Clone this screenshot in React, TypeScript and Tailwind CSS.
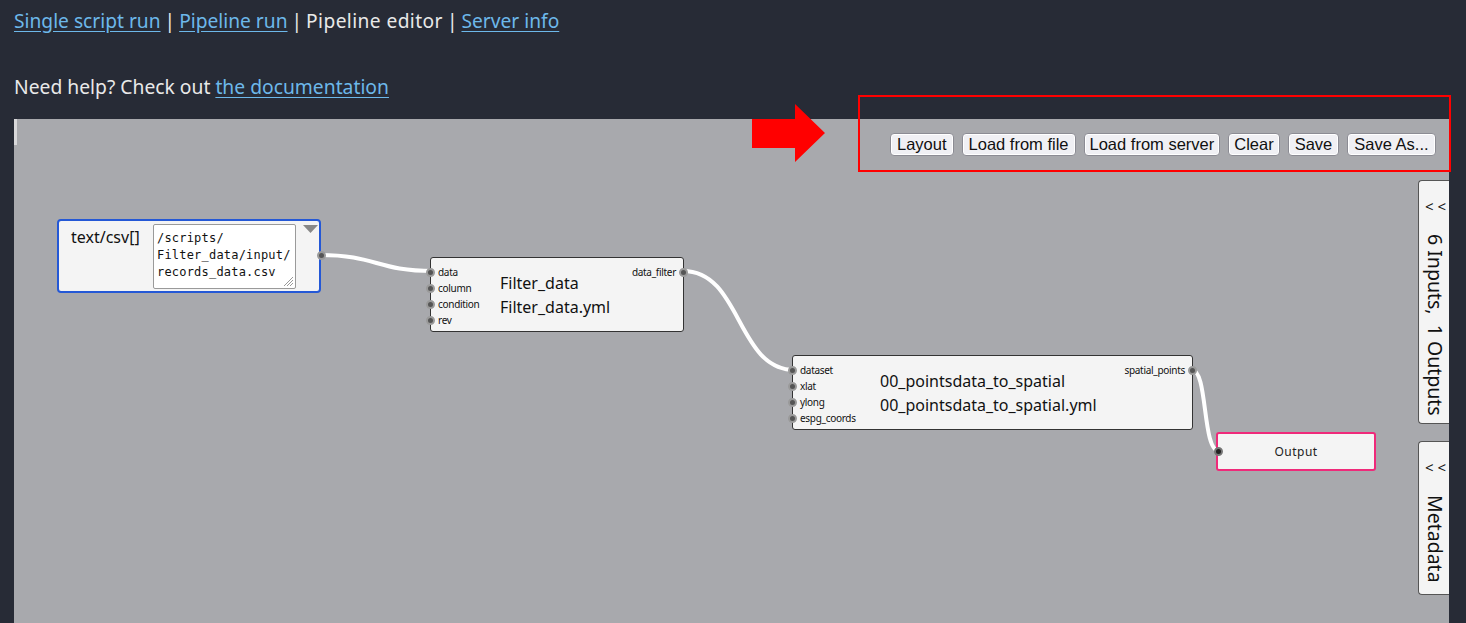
import React from "react";

const Port = ({ dark = false }: { dark?: boolean }) => (
  <span
    className={`block w-[9px] h-[9px] rounded-full border-2 ${
      dark ? "bg-[#222] border-[#777]" : "bg-[#555] border-[#9a9a9a]"
    }`}
  />
);

const ToolBtn = ({ label, px }: { label: string; px: string }) => (
  <button
    className={`h-[23px] ${px} rounded-[4px] border border-[#8c8c94] bg-[#f0f0f4] text-[16.5px] leading-none text-[#111] [font-family:'Liberation_Sans',Arial,sans-serif] shadow-[inset_0_0_0_1px_#fff]`}
  >
    {label}
  </button>
);

function ScriptNode({
  left,
  top,
  width,
  inputs,
  output,
  title,
  file,
  titleLeft,
}: {
  left: number;
  top: number;
  width: number;
  inputs: string[];
  output: string;
  title: string;
  file: string;
  titleLeft: number;
}) {
  return (
    <div
      className="absolute h-[75px] rounded-[3px] border border-[#333] bg-[#f4f4f4] flex"
      style={{ left, top, width }}
    >
      <div className="flex flex-col pt-[8px] gap-[4px] -ml-[5px]">
        {inputs.map((i) => (
          <div key={i} className="flex items-center gap-[3px] h-[12px]">
            <Port />
            <span className="text-[10px] tracking-[-0.3px] text-[#111] [font-family:'Noto_Sans',sans-serif] leading-none">
              {i}
            </span>
          </div>
        ))}
      </div>
      <div
        className="flex flex-col pt-[15px] gap-[4px] text-[16px] leading-[20px] text-[#111] [font-family:'Noto_Sans',sans-serif]"
        style={{ position: "absolute", left: titleLeft }}
      >
        <span>{title}</span>
        <span>{file}</span>
      </div>
      <div className="ml-auto flex items-start pt-[8px] -mr-[5px]">
        <div className="flex items-center gap-[3px] h-[12px]">
          <span className="text-[10px] tracking-[-0.3px] text-[#111] [font-family:'Noto_Sans',sans-serif] leading-none">
            {output}
          </span>
          <Port />
        </div>
      </div>
    </div>
  );
}

const Sep = () => <span className="mx-[4px]">|</span>;

export default function App() {
  return (
    <div className="relative w-[1466px] h-[623px] overflow-hidden bg-[#272b36] [font-family:'Noto_Sans',sans-serif]">
      <div className="pl-[14px]">
        <div className="h-[42px] flex items-center text-[19.2px] text-[#e9e9e9] whitespace-pre">
          <a className="text-[#6db8ea] underline underline-offset-[3px]">Single script run</a>
          <Sep />
          <a className="text-[#6db8ea] underline underline-offset-[3px]">Pipeline run</a>
          <Sep />
          <span className="tracking-[0.4px]">Pipeline editor</span>
          <Sep />
          <a className="text-[#6db8ea] underline underline-offset-[3px]">Server info</a>
        </div>
        <div className="h-[42px] mt-[24px] flex items-center text-[19.3px] text-[#e9e9e9] whitespace-pre">
          <span>Need help? Check out </span>
          <a className="text-[#6db8ea] underline underline-offset-[3px]">the documentation</a>
        </div>
        <div className="relative mt-[11px] w-[1435px] h-[504px] bg-[#a8a9ad] overflow-hidden">
          {/* scrollbar hint */}
          <div className="absolute left-0 top-0 w-[3px] h-[26px] bg-[#d8d8da]" />

          {/* edges */}
          <svg className="absolute inset-0" width="1435" height="504">
            <g fill="none" stroke="#ffffff" strokeWidth="4" strokeLinecap="round">
              <path d="M306 136 C 362 136, 363 152, 419 152" />
              <path d="M669 152 C 728 152, 722 251, 781 251" />
              <path d="M1178 251 C 1194 251, 1188 332, 1205 332" />
            </g>
          </svg>

          {/* toolbar */}
          <div className="absolute left-[876px] top-[14px] flex gap-[8px]">
            <ToolBtn label="Layout" px="px-[6px]" />
            <ToolBtn label="Load from file" px="px-[6px]" />
            <ToolBtn label="Load from server" px="px-[5px]" />
            <ToolBtn label="Clear" px="px-[5px]" />
            <ToolBtn label="Save" px="px-[6px]" />
            <ToolBtn label="Save As..." px="px-[6px]" />
          </div>

          {/* input node */}
          <div className="absolute left-[43px] top-[100px] w-[264px] h-[74px] rounded-[4px] border-2 border-[#2458d6] bg-[#f4f4f4]">
            <span className="absolute left-[12px] top-[6px] text-[16px] leading-[20px] text-[#111] [font-family:'Noto_Sans',sans-serif]">
              text/csv[]
            </span>
            <div className="absolute left-[94px] top-[3px] w-[143px] h-[65px] border border-[#9a9a9a] bg-white rounded-[2px] px-[3px] pt-[5px] text-[12px] leading-[17px] text-[#111] [font-family:'DejaVu_Sans_Mono',monospace] tracking-[0.2px]">
              <div>/scripts/</div>
              <div>Filter_data/input/</div>
              <div>records_data.csv</div>
              <svg className="absolute right-[1px] bottom-[1px]" width="11" height="11">
                <g stroke="#999" strokeWidth="1">
                  <line x1="10" y1="1" x2="1" y2="10" />
                  <line x1="10" y1="4" x2="4" y2="10" />
                  <line x1="10" y1="7" x2="7" y2="10" />
                </g>
              </svg>
            </div>
            <svg className="absolute left-[244px] top-[4px]" width="15" height="8">
              <polygon points="0,0 15,0 7.5,8" fill="#888" />
            </svg>
            <div className="absolute -right-[7px] top-[30px]">
              <Port />
            </div>
          </div>

          <ScriptNode
            left={416}
            top={138}
            width={254}
            inputs={["data", "column", "condition", "rev"]}
            output="data_filter"
            title="Filter_data"
            file="Filter_data.yml"
            titleLeft={69}
          />
          <ScriptNode
            left={778}
            top={236}
            width={401}
            inputs={["dataset", "xlat", "ylong", "espg_coords"]}
            output="spatial_points"
            title="00_pointsdata_to_spatial"
            file="00_pointsdata_to_spatial.yml"
            titleLeft={87}
          />

          {/* output node */}
          <div className="absolute left-[1202px] top-[313px] w-[160px] h-[39px] rounded-[3px] border-2 border-[#ef2a7a] bg-[#f4f4f4] flex items-center justify-center">
            <span className="text-[12px] tracking-[0.5px] text-[#222] [font-family:'Noto_Sans',sans-serif]">
              Output
            </span>
            <div className="absolute -left-[4px] top-[13px]">
              <Port dark />
            </div>
          </div>

          {/* side tabs */}
          <div className="absolute left-[1404px] top-[61px] w-[31px] h-[244px] rounded-l-[4px] border border-r-0 border-[#555] bg-[#f4f4f4] flex flex-col items-start pl-[6px] pt-[17px] gap-[20px]">
            <span className="text-[15px] leading-[16px] text-[#111] whitespace-pre">&lt; &lt;</span>
            <span className="[writing-mode:vertical-rl] text-[19.5px] leading-[20px] text-[#111] whitespace-pre">6 Inputs,  1 Outputs</span>
          </div>
          <div className="absolute left-[1404px] top-[322px] w-[31px] h-[154px] rounded-l-[4px] border border-r-0 border-[#555] bg-[#f4f4f4] flex flex-col items-start pl-[6px] pt-[17px] gap-[20px]">
            <span className="text-[15px] leading-[16px] text-[#111] whitespace-pre">&lt; &lt;</span>
            <span className="[writing-mode:vertical-rl] text-[19.5px] leading-[20px] text-[#111]">Metadata</span>
          </div>
        </div>
      </div>

      {/* annotation: red arrow and box */}
      <svg className="absolute left-[752px] top-[104px]" width="74" height="59">
        <polygon points="0,15 43,15 43,0 73,29 43,58 43,44 0,44" fill="#ff0000" />
      </svg>
      <div className="absolute left-[858px] top-[95px] w-[593px] h-[77px] border-2 border-[#ff0000]" />
    </div>
  );
}
